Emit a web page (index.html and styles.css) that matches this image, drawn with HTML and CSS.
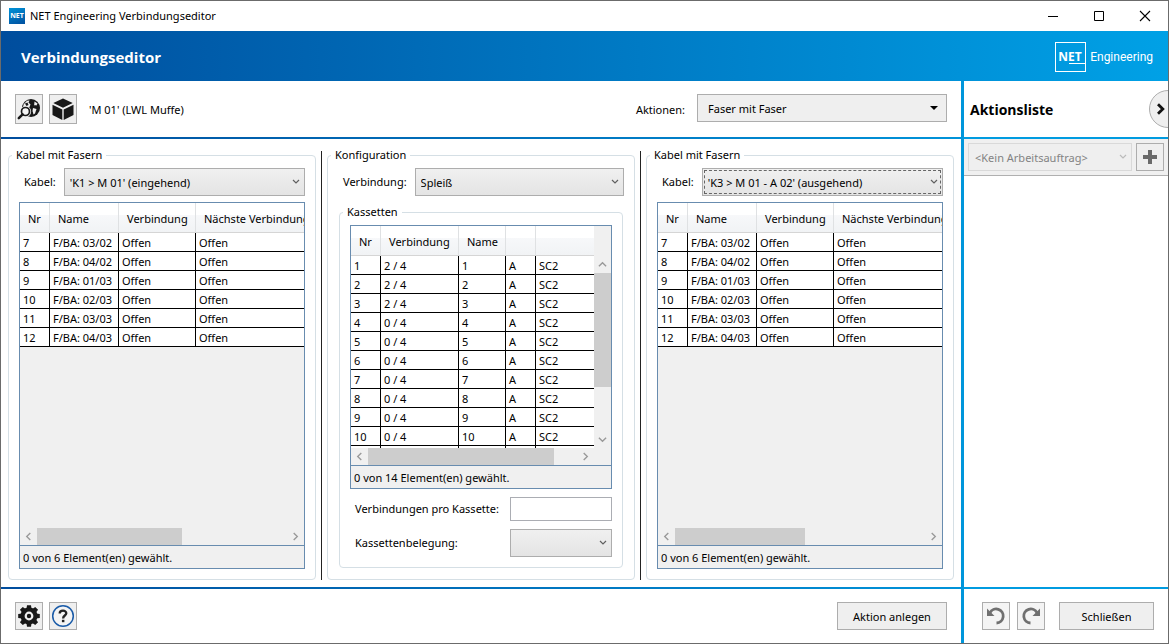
FILE: index.html
```html
<!DOCTYPE html>
<html lang="de">
<head>
<meta charset="utf-8">
<meta name="viewport" content="width=device-width, initial-scale=1">
<title>NET Engineering Verbindungseditor</title>
<link rel="stylesheet" href="styles.css">
</head>
<body>
<svg class="sprite" aria-hidden="true">
  <symbol id="chev-down" viewBox="0 0 8 8"><path d="M1 2 4 5 7 2" fill="none" stroke="currentColor" stroke-width="1.2"/></symbol>
  <symbol id="arr-left" viewBox="0 0 10 10"><path d="M7 1 3 5 7 9" fill="none" stroke="currentColor" stroke-width="1.5"/></symbol>
  <symbol id="arr-right" viewBox="0 0 10 10"><path d="M3 1 7 5 3 9" fill="none" stroke="currentColor" stroke-width="1.5"/></symbol>
  <symbol id="arr-up" viewBox="0 0 10 10"><path d="M1 7 5 3 9 7" fill="none" stroke="currentColor" stroke-width="1.5"/></symbol>
  <symbol id="arr-down" viewBox="0 0 10 10"><path d="M1 3 5 7 9 3" fill="none" stroke="currentColor" stroke-width="1.5"/></symbol>
</svg>
<div class="window">
  <div class="titlebar">
    <span class="app-icon">NET</span>
    <span class="window-title">NET Engineering Verbindungseditor</span>
    <button class="win-btn" aria-label="Minimieren"><svg width="12" height="12"><path d="M1 6.5h10" stroke="#000"/></svg></button>
    <button class="win-btn" aria-label="Maximieren"><svg width="12" height="12"><path d="M1.500 1.500h9v9h-9z" stroke="#000" fill="none"/></svg></button>
    <button class="win-btn" aria-label="Fenster schließen"><svg width="12" height="12"><path d="M1 1 11 11M11 1 1 11" stroke="#000" stroke-width="1.1"/></svg></button>
  </div>
  <header class="banner">
    <h1>Verbindungseditor</h1>
    <div class="brand"><span class="brand-box">NET</span><span class="brand-name">Engineering</span></div>
  </header>

  <div class="body">
    <main class="workspace">
      <div class="toolbar">
        <button class="icon-btn tall" aria-label="In Karte suchen"><svg width="24" height="24" viewBox="0 0 24 24">
          <circle cx="14" cy="11" r="9" fill="#181818"/>
          <path d="M6.500 7.500 10 3.800 12.500 3.400 11.500 5.500 13.500 7.500 12.500 10 9 10.500 6 12z" fill="#efefef"/>
          <path d="M17.500 4.500 20.500 6.500 19.500 8.500 17.500 8 17 9.500z" fill="#efefef"/>
          <path d="M16 11 19.500 12 18 16.500 16.500 17.500 15.500 14z" fill="#efefef"/>
          <path d="M8 6.500 10.500 5.500 11.500 8 9.500 9z" fill="#181818"/>
          <circle cx="8.500" cy="14.500" r="5.600" fill="#efefef"/>
          <circle cx="8.500" cy="14.500" r="4" fill="#f4f4f4" stroke="#181818" stroke-width="1.700"/>
          <path d="M5.600 17.400 1.800 21.200" stroke="#181818" stroke-width="2.500" stroke-linecap="round"/></svg></button>
        <button class="icon-btn tall" aria-label="Objekt"><svg width="24" height="24" viewBox="0 0 24 24" fill="#181818">
          <path d="M12 1.500 21.700 6.100 12 10.800 2.300 6.100z"/><path d="M1.500 7.700 11.300 12.400V23L1.500 18z"/><path d="M22.500 7.700 12.700 12.400V23l9.800-5z"/></svg></button>
        <span class="object-name">'M 01' (LWL Muffe)</span>
        <label class="push" for="aktionen">Aktionen:</label>
        <span class="combo flat actions"><select id="aktionen"><option>Faser mit Faser</option></select><svg class="tri" width="10" height="6" viewBox="0 0 10 6"><path d="M1 1h8L5 5z"/></svg></span>
      </div>
      <div class="rule rule-left"></div>

      <div class="panels">
        <fieldset class="group">
          <legend>Kabel mit Fasern</legend>
          <div class="field">
            <label for="kabel1">Kabel:</label>
            <span class="combo cable"><select id="kabel1"><option>'K1 &gt; M 01' (eingehend)</option></select><svg class="chev"><use href="#chev-down"/></svg></span>
          </div>
          <div class="grid">
            <div class="rows">
              <table class="fibers">
                <colgroup><col class="c-nr"><col class="c-name"><col class="c-conn"><col class="c-next"></colgroup>
                <thead><tr><th>Nr</th><th>Name</th><th>Verbindung</th><th>Nächste Verbindung</th></tr></thead>
                <tbody>
                  <tr><td>7</td><td>F/BA: 03/02</td><td>Offen</td><td>Offen</td></tr>
                  <tr><td>8</td><td>F/BA: 04/02</td><td>Offen</td><td>Offen</td></tr>
                  <tr><td>9</td><td>F/BA: 01/03</td><td>Offen</td><td>Offen</td></tr>
                  <tr><td>10</td><td>F/BA: 02/03</td><td>Offen</td><td>Offen</td></tr>
                  <tr><td>11</td><td>F/BA: 03/03</td><td>Offen</td><td>Offen</td></tr>
                  <tr><td>12</td><td>F/BA: 04/03</td><td>Offen</td><td>Offen</td></tr>
                </tbody>
              </table>
            </div>
            <div class="hscroll"><svg class="arr"><use href="#arr-left"/></svg><div class="track"><div class="thumb thumb-a"></div></div><svg class="arr"><use href="#arr-right"/></svg></div>
            <div class="status">0 von 6 Element(en) gewählt.</div>
          </div>
        </fieldset>

        <div class="divider"></div>

        <fieldset class="group">
          <legend>Konfiguration</legend>
          <div class="field">
            <label for="verbindung">Verbindung:</label>
            <span class="combo conn"><select id="verbindung"><option>Spleiß</option></select><svg class="chev"><use href="#chev-down"/></svg></span>
          </div>
          <fieldset class="group inner">
            <legend>Kassetten</legend>
            <div class="grid">
              <div class="split">
                <div class="rows">
                  <table class="trays">
                    <colgroup><col class="c-nr"><col class="c-used"><col class="c-tray"><col class="c-side"><col></colgroup>
                    <thead><tr><th>Nr</th><th>Verbindung</th><th>Name</th><th></th><th></th></tr></thead>
                    <tbody>
                      <tr><td>1</td><td>2 / 4</td><td>1</td><td>A</td><td>SC2</td></tr>
                      <tr><td>2</td><td>2 / 4</td><td>2</td><td>A</td><td>SC2</td></tr>
                      <tr><td>3</td><td>2 / 4</td><td>3</td><td>A</td><td>SC2</td></tr>
                      <tr><td>4</td><td>0 / 4</td><td>4</td><td>A</td><td>SC2</td></tr>
                      <tr><td>5</td><td>0 / 4</td><td>5</td><td>A</td><td>SC2</td></tr>
                      <tr><td>6</td><td>0 / 4</td><td>6</td><td>A</td><td>SC2</td></tr>
                      <tr><td>7</td><td>0 / 4</td><td>7</td><td>A</td><td>SC2</td></tr>
                      <tr><td>8</td><td>0 / 4</td><td>8</td><td>A</td><td>SC2</td></tr>
                      <tr><td>9</td><td>0 / 4</td><td>9</td><td>A</td><td>SC2</td></tr>
                      <tr><td>10</td><td>0 / 4</td><td>10</td><td>A</td><td>SC2</td></tr>
                      <tr><td></td><td></td><td></td><td></td><td></td></tr>
                    </tbody>
                  </table>
                </div>
                <div class="vscroll"><svg class="arr"><use href="#arr-up"/></svg><div class="vtrack"><div class="vthumb"></div></div><svg class="arr"><use href="#arr-down"/></svg></div>
              </div>
              <div class="hscroll with-corner"><svg class="arr"><use href="#arr-left"/></svg><div class="track"><div class="thumb thumb-b"></div></div><svg class="arr"><use href="#arr-right"/></svg></div>
              <div class="status">0 von 14 Element(en) gewählt.</div>
            </div>
            <div class="form-row">
              <label for="prokassette">Verbindungen pro Kassette:</label>
              <input class="textbox" id="prokassette" type="text">
            </div>
            <div class="form-row">
              <label for="belegung">Kassettenbelegung:</label>
              <span class="combo alloc"><select id="belegung"><option></option></select><svg class="chev"><use href="#chev-down"/></svg></span>
            </div>
          </fieldset>
        </fieldset>

        <div class="divider"></div>

        <fieldset class="group">
          <legend>Kabel mit Fasern</legend>
          <div class="field">
            <label for="kabel2">Kabel:</label>
            <span class="combo cable focused"><select id="kabel2"><option>'K3 &gt; M 01 - A 02' (ausgehend)</option></select><svg class="chev"><use href="#chev-down"/></svg></span>
          </div>
          <div class="grid">
            <div class="rows">
              <table class="fibers">
                <colgroup><col class="c-nr"><col class="c-name"><col class="c-conn"><col class="c-next"></colgroup>
                <thead><tr><th>Nr</th><th>Name</th><th>Verbindung</th><th>Nächste Verbindung</th></tr></thead>
                <tbody>
                  <tr><td>7</td><td>F/BA: 03/02</td><td>Offen</td><td>Offen</td></tr>
                  <tr><td>8</td><td>F/BA: 04/02</td><td>Offen</td><td>Offen</td></tr>
                  <tr><td>9</td><td>F/BA: 01/03</td><td>Offen</td><td>Offen</td></tr>
                  <tr><td>10</td><td>F/BA: 02/03</td><td>Offen</td><td>Offen</td></tr>
                  <tr><td>11</td><td>F/BA: 03/03</td><td>Offen</td><td>Offen</td></tr>
                  <tr><td>12</td><td>F/BA: 04/03</td><td>Offen</td><td>Offen</td></tr>
                </tbody>
              </table>
            </div>
            <div class="hscroll"><svg class="arr"><use href="#arr-left"/></svg><div class="track"><div class="thumb thumb-c"></div></div><svg class="arr"><use href="#arr-right"/></svg></div>
            <div class="status">0 von 6 Element(en) gewählt.</div>
          </div>
        </fieldset>
      </div>

      <div class="rule rule-left"></div>
      <footer class="footer">
        <button class="icon-btn" aria-label="Einstellungen"><svg width="24" height="24" viewBox="0 0 24 24">
          <g fill="#181818"><circle cx="12" cy="12" r="8.500"/>
          <path id="tooth" d="M10 1.200h4l.6 4H9.400zM10 22.800h4l.6-4H9.400z"/>
          <use href="#tooth" transform="rotate(45 12 12)"/><use href="#tooth" transform="rotate(90 12 12)"/><use href="#tooth" transform="rotate(135 12 12)"/></g>
          <circle cx="12" cy="12" r="3.300" fill="none" stroke="#efefef" stroke-width="2.200"/></svg></button>
        <button class="icon-btn" aria-label="Hilfe"><svg width="24" height="24" viewBox="0 0 24 24">
          <circle cx="12" cy="12" r="10.300" fill="#f4f4f4" stroke="#1a5ba8" stroke-width="1.500"/>
          <path d="M8.700 9.500C8.700 5.800 15.300 5.800 15.300 9.300 15.300 11.500 12.100 11.600 12.100 14.400" fill="none" stroke="#222" stroke-width="2.300"/><path d="M10.900 15.800h2.500v2.400h-2.500z" fill="#222"/></svg></button>
        <button class="btn btn-create push">Aktion anlegen</button>
      </footer>
    </main>

    <aside class="sidebar">
      <div class="side-head">
        <h2>Aktionsliste</h2>
        <button class="collapse" aria-label="Liste einklappen"><svg width="10" height="12" viewBox="0 0 10 12"><path d="M2 1.300 6.800 6 2 10.700" fill="none" stroke="#111" stroke-width="2.800"/></svg></button>
      </div>
      <div class="rule rule-right"></div>
      <div class="side-tools">
        <span class="combo flat order"><select aria-label="Arbeitsauftrag" disabled><option>&lt;Kein Arbeitsauftrag&gt;</option></select><svg class="chev"><use href="#chev-down"/></svg></span>
        <button class="icon-btn" aria-label="Hinzufügen"><svg width="16" height="16"><path d="M8 1v14M1 8h14" stroke="#6a6a6a" stroke-width="4"/></svg></button>
      </div>
      <div class="side-list"></div>
      <div class="rule rule-right"></div>
      <footer class="side-foot">
        <button class="icon-btn pale" aria-label="Rückgängig"><svg width="20" height="20" viewBox="0 0 20 20"><path d="M4 6.800A7 7 0 1 1 10.500 17" fill="none" stroke="#707070" stroke-width="2.800"/><path d="M1 2.500V10h7.500z" fill="#707070"/></svg></button>
        <button class="icon-btn pale" aria-label="Wiederholen"><svg width="20" height="20" viewBox="0 0 20 20"><path d="M16 6.800A7 7 0 1 0 9.500 17" fill="none" stroke="#707070" stroke-width="2.800"/><path d="M19 2.500V10h-7.500z" fill="#707070"/></svg></button>
        <button class="btn btn-close">Schließen</button>
      </footer>
    </aside>
  </div>
</div>
</body>
</html>
```
FILE: styles.css
```css
* { box-sizing: border-box; }
body {
  margin: 0;
  font: 11px/16px "Noto Sans", "Open Sans", sans-serif;
  color: #000;
  background: #fff;
}
.sprite { position: absolute; width: 0; height: 0; }
svg { display: block; flex: none; }
button, select, input { font: inherit; color: inherit; margin: 0; border-radius: 0; }
button { padding: 0; display: flex; align-items: center; justify-content: center; }
.window {
  display: flex;
  flex-direction: column;
  height: 100vh;
  min-height: 520px;
  border: 1px solid #6b6b6b;
  overflow: hidden;
}

/* Title bar */
.titlebar { display: flex; align-items: center; flex: none; height: 30px; padding-left: 8px; }
.app-icon {
  width: 16px; height: 16px;
  background: linear-gradient(160deg, #0093d8, #004f9f);
  color: #fff;
  font: bold 7px/15px "Open Sans", sans-serif;
  text-align: center;
}
.window-title { flex: 1; padding-left: 5px; }
.win-btn { width: 46px; height: 30px; border: 0; background: none; }

/* Banner */
.banner {
  display: flex; align-items: center; justify-content: space-between;
  flex: none; height: 50px; padding: 2px 15px 0 20px;
  background: linear-gradient(90deg, #004d9d, #00a1e6);
  color: #fff;
}
.banner h1 { margin: 0; font: bold 15px/20px "Open Sans", sans-serif; }
.brand { display: flex; align-items: center; gap: 4px; }
.brand-box {
  width: 31px; height: 30px; padding-left: 2px;
  border: 1px solid #fff;
  font: bold 12px/28px "Open Sans", sans-serif;
  background: linear-gradient(#fff, #fff) right 20px / 16px 1px no-repeat;
}
.brand-name { font: 12px/16px Roboto, sans-serif; }

.body { flex: 1; min-height: 0; display: grid; grid-template-columns: minmax(0, 1fr) 207px; }
.workspace, .sidebar { display: flex; flex-direction: column; min-width: 0; min-height: 0; }
.sidebar { border-left: 3px solid #0096db; }
.rule { flex: none; height: 2px; }
.rule-left { background: linear-gradient(90deg, #004d9d, #0093d9); }
.rule-right { background: #009be0; }

/* Toolbar */
.toolbar { display: flex; align-items: flex-start; gap: 6px; flex: none; height: 56px; padding: 13px 14px 0; line-height: 32px; }
.push { margin-left: auto; }
.object-name { padding-left: 6px; }
.icon-btn { flex: none; width: 28px; height: 28px; border: 1px solid #adadad; background: #efefef; }
.icon-btn.tall { height: 30px; }
.icon-btn.pale { background: #f4f4f4; }

/* Combo boxes */
.combo { display: grid; flex: none; height: 28px; line-height: 16px; }
.combo > * { grid-area: 1 / 1; }
.combo select {
  appearance: none;
  width: 100%; height: 28px; padding: 2px 20px 0 5px;
  border: 1px solid #adadad;
  background: linear-gradient(#f0f0f0, #e4e4e4);
}
.combo.flat select { background: #efefef; padding-left: 10px; }
.combo svg { justify-self: end; align-self: center; pointer-events: none; }
.chev { width: 8px; height: 8px; margin-right: 5px; color: #606060; }
.tri { margin-right: 8px; }
.combo.actions { width: 250px; margin-left: 6px; }
.combo.cable, .combo.conn { flex: 1; }
.combo.focused select { outline: 1px dashed #666; outline-offset: -3px; }
.combo.alloc { width: 102px; }
.combo.order { flex: 1; }
.combo.order select { color: #838383; border-color: #d9d9d9; opacity: 1; padding-left: 6px; }
.combo.order .chev { color: #bbb; }

/* Panels */
.panels {
  flex: 1; min-height: 0;
  display: grid;
  grid-template-columns: minmax(0, 1fr) 1px minmax(0, 1fr) 1px minmax(0, 1fr);
  grid-template-rows: minmax(0, 1fr);
  gap: 5px;
  padding: 8px 7px 7px;
}
.divider { margin-top: 4px; background: #222; }
.group {
  display: flex; flex-direction: column;
  min-width: 0; min-height: 0; margin: 0;
  padding: 5px 10px 10px;
  border: 1px solid #d5dfe5;
  border-radius: 4px;
}
.group legend { padding: 0 4px; margin-left: -7px; line-height: 16px; }
.group.inner { flex: 1; margin: 8px 1px 1px; }
.field { display: flex; align-items: center; flex: none; gap: 8px; padding-left: 5px; line-height: 30px; height: 28px; }
.group > .grid { margin-top: 6px; }
.group.inner > .grid { margin-top: 0; }
.form-row { display: flex; align-items: center; justify-content: space-between; flex: none; margin-top: 8px; padding-left: 5px; }
.textbox { width: 102px; height: 24px; padding: 0 4px; border: 1px solid #abadb3; background: #fff; }

/* Data grids */
.grid { flex: 1 1 0; min-height: 0; display: flex; flex-direction: column; border: 1px solid #688caf; background: #f0f0f0; }
.rows { flex: 1 1 0; min-width: 0; min-height: 0; overflow: hidden; }
.split { flex: 1 1 0; min-height: 0; display: flex; }
table { table-layout: fixed; border-collapse: separate; border-spacing: 0; background: #fff; }
.fibers { width: 310px; }
.trays { width: 100%; }
.c-nr { width: 30px; }
.c-name { width: 69px; }
.c-conn { width: 77px; }
.c-used { width: 78px; }
.c-tray { width: 47px; }
.c-side { width: 30px; }
th {
  height: 30px; padding: 2px 0 0 8px;
  border-right: 1px solid #dfe1e3; border-bottom: 1px solid #d5d5d5;
  background: linear-gradient(#fff 40%, #f7f8fa 40%, #f1f3f5);
  font-weight: 400; text-align: left; white-space: nowrap;
}
td { height: 19px; padding: 2px 0 0 3px; border-right: 1px solid #000; border-bottom: 1px solid #000; white-space: nowrap; }
td:last-child, th:last-child { border-right: 0; }
.hscroll { display: flex; align-items: center; flex: none; height: 17px; }
.hscroll.with-corner { padding-right: 17px; }
.arr { width: 9px; height: 9px; margin: 4px; color: #999; }
.track { flex: 1; height: 17px; }
.thumb { height: 17px; background: #cdcdcd; }
.thumb-a { width: 58%; }
.thumb-b { width: 89%; }
.thumb-c { width: 52%; }
.vscroll { display: flex; flex-direction: column; flex: none; width: 17px; padding-top: 30px; }
.vtrack { flex: 1; }
.vthumb { height: 72%; background: #cdcdcd; }
.status { flex: none; height: 23px; padding: 4px 3px 0; border-top: 1px solid #688caf; }

/* Footers and buttons */
.footer { display: flex; align-items: center; flex: none; gap: 6px; height: 54px; padding: 0 14px; }
.btn { height: 28px; padding-top: 2px; border: 1px solid #adadad; background: #efefef; }
.btn-create { width: 110px; }

/* Action list */
.side-head { display: flex; align-items: center; justify-content: space-between; flex: none; height: 56px; padding-left: 6px; overflow: hidden; }
.side-head h2 { margin: 0; padding-top: 2px; font: bold 14px/20px "Open Sans", sans-serif; }
.collapse {
  flex: none; width: 38px; height: 38px; margin-right: -19px;
  justify-content: flex-start; padding-left: 6px;
  border: 1px solid #adadad; border-radius: 50%; background: #efefef;
}
.side-tools { display: flex; flex: none; gap: 4px; height: 37px; padding: 4px; background: #f0f0f0; border-bottom: 1px solid #b0b0b0; }
.side-list { flex: 1; }
.side-foot { display: flex; align-items: center; flex: none; gap: 7px; height: 54px; padding: 0 14px 0 18px; }
.btn-close { flex: 1; margin-left: 7px; }
```
